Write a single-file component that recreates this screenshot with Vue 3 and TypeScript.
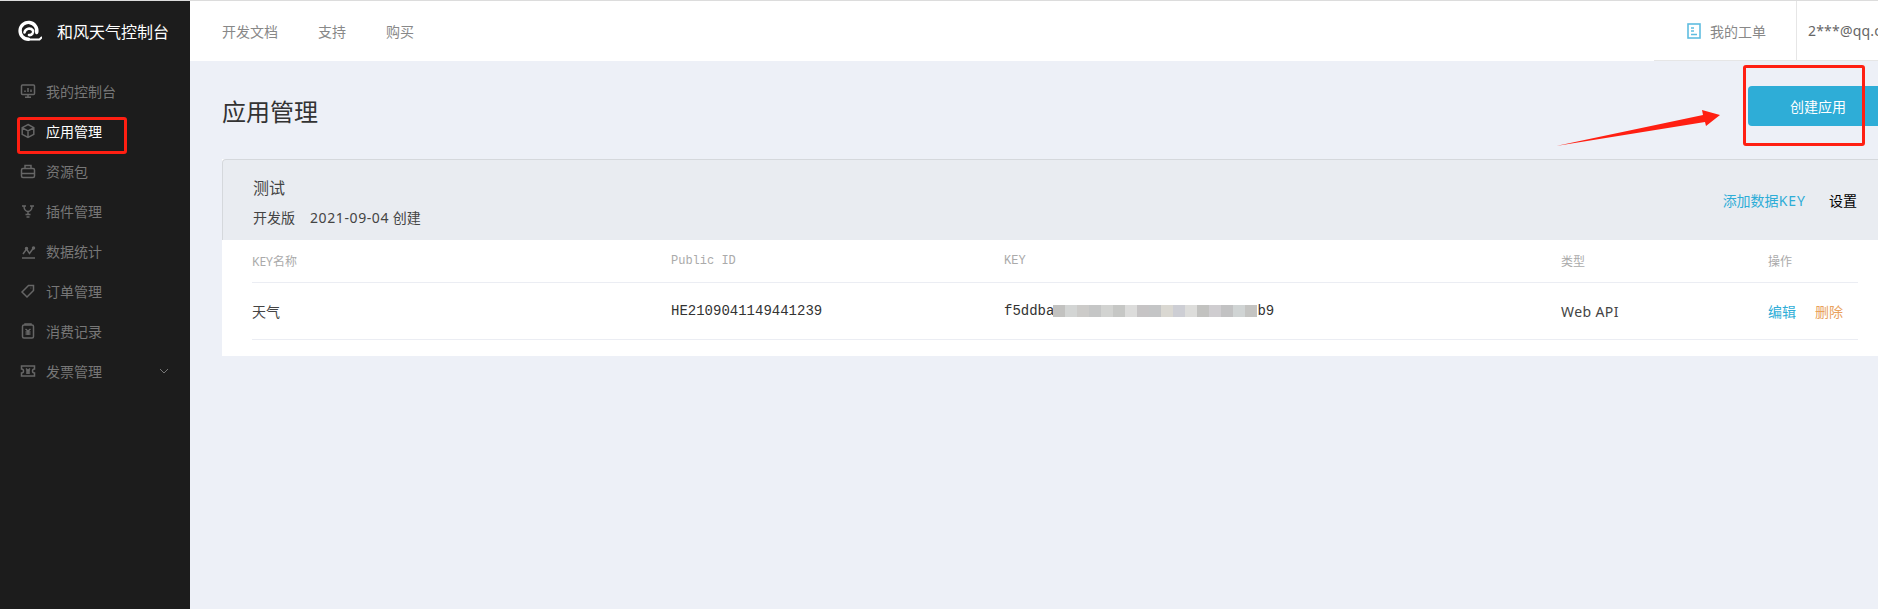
<script setup lang="ts">
const nav = [
  { label: '我的控制台', icon: 'monitor' },
  { label: '应用管理', icon: 'box', active: true },
  { label: '资源包', icon: 'bag' },
  { label: '插件管理', icon: 'plug' },
  { label: '数据统计', icon: 'chart' },
  { label: '订单管理', icon: 'tag' },
  { label: '消费记录', icon: 'clip' },
  { label: '发票管理', icon: 'ticket', arrow: true },
]
const blur = ['#c2c2c0','#d3d5d4','#cccbc9','#c5c6c6','#d2d3d1','#c6c7c5','#dcdcdb','#c6c4c5','#c4c5c6','#dad8d2','#cdced4','#dddddb','#c2c2c0','#cfcdd0','#c2c2c3','#d0d4d4','#c4c4c2']
</script>

<template>
  <div class="page">
    <aside class="side">
      <div class="brand">
        <svg class="logo" viewBox="0 0 24 24" width="24" height="24" fill="none" stroke="#fff" stroke-linecap="round">
          <path d="M10.500 20.200A8.400 8.400 0 1 1 18.700 13.500" stroke-width="3.400" />
          <path d="M10.500 20.400H21.500L23.500 18.500" stroke-width="2" />
          <path d="M6.500 13.500A4.800 4.800 0 0 1 15 11.500A3.500 3.500 0 0 1 11 16" stroke-width="2.600" />
        </svg>
        <span>和风天气控制台</span>
      </div>
      <nav class="menu">
        <div v-for="n in nav" :key="n.label" class="item" :class="{ active: n.active }">
          <svg class="ico" viewBox="0 0 16 16" width="16" height="16" fill="none" stroke="#666" stroke-width="1.500">
            <template v-if="n.icon === 'monitor'"><rect x="1.500" y="2" width="13" height="9.500" rx="1"/><path d="M8 11.500v2.500M5 14.200h6M5 9V7.500M8 9V5M11 9V6.500"/></template>
            <template v-else-if="n.icon === 'box'"><path d="M8 1.500l5.800 3.200v6.600L8 14.500l-5.800-3.200V4.700zM2.400 4.800L8 8l5.600-3.200M8 8v6.300"/></template>
            <template v-else-if="n.icon === 'bag'"><rect x="1.500" y="5.500" width="13" height="9" rx="1.500"/><path d="M5 5.500V2.500h6v3M1.500 10.500h13"/></template>
            <template v-else-if="n.icon === 'plug'"><path d="M2 3h4M10 3h4M4 3c0 3.500 2 5.500 4 5.500S12 6.500 12 3M8 8.500v3M5.500 11.500h5M6.500 14h3"/></template>
            <template v-else-if="n.icon === 'chart'"><path d="M2 15h13M3 11l3.500-5 3 4.500L13.500 5"/><circle cx="6.500" cy="5.500" r="1" fill="#666"/><circle cx="13.500" cy="5" r="1" fill="#666"/></template>
            <template v-else-if="n.icon === 'tag'"><path d="M8.500 2.500h5v5L7 14l-5-5zM10.800 4.700v.6"/></template>
            <template v-else-if="n.icon === 'clip'"><rect x="2.500" y="2" width="11" height="13" rx="1.500"/><path d="M5 2V1h6v1M5.500 6L8 8l2.500-2M5.500 9h5M5.500 11h5M8 8v4"/></template>
            <template v-else><path d="M1.500 3h13v3a2 2 0 0 0 0 4v3h-13v-3a2 2 0 0 0 0-4zM6 5.500l2 2 2-2M6 8h4M6 10h4M8 7.500V11"/></template>
          </svg>
          <span class="label">{{ n.label }}</span>
          <svg v-if="n.arrow" class="chev" viewBox="0 0 10 6" width="10" height="6" fill="none" stroke="#777"><path d="M1 1l4 4 4-4"/></svg>
        </div>
      </nav>
    </aside>

    <div class="main">
      <header class="top">
        <div class="links"><a>开发文档</a><a>支持</a><a>购买</a></div>
        <div class="tools">
          <div class="ticket">
            <svg viewBox="0 0 14 16" width="14" height="16" fill="none" stroke="#5fbde0" stroke-width="1.600"><rect x="1" y="1" width="12" height="14"/><path d="M4 5h3M4 8h3M4 11.500h6"/></svg>
            <span>我的工单</span>
          </div>
          <div class="user">2***@qq.com</div>
        </div>
      </header>

      <section class="content">
        <div class="title-row">
          <h1>应用管理</h1>
          <button class="create">创建应用</button>
        </div>

        <div class="card">
          <div class="card-head">
            <div class="info">
              <div class="app-name">测试</div>
              <div class="app-meta"><span>开发版</span><span><span class="date">2021-09-04</span> 创建</span></div>
            </div>
            <div class="actions"><a class="blue">添加数据<span class="keyword">KEY</span></a><a class="black">设置</a></div>
          </div>
          <div class="table">
            <div class="row head">
              <span>KEY名称</span><span class="mono">Public ID</span><span class="mono">KEY</span><span>类型</span><span>操作</span>
            </div>
            <div class="row body">
              <span>天气</span>
              <span class="mono">HE2109041149441239</span>
              <span class="mono key">f5ddba<i class="blur"><b v-for="(c, i) in blur" :key="i" :style="{ background: c }"></b></i>b9</span>
              <span class="lat">Web API</span>
              <span class="ops"><a class="blue">编辑</a><a class="orange">删除</a></span>
            </div>
          </div>
        </div>
      </section>
    </div>

    <div class="mark mark-side"></div>
    <div class="mark mark-btn"></div>
    <svg class="arrow" viewBox="0 0 170 40" width="170" height="40">
      <polygon points="1,38 148,7 147,2 165,7 151,18 150,14" fill="#ff1f12" />
    </svg>
  </div>
</template>

<style>
html, body { margin: 0; background: #edf0f7; }
</style>

<style scoped>
.page {
  position: relative;
  display: flex;
  width: 1878px;
  height: 609px;
  overflow: hidden;
  border-top: 1px solid #dcdcdc;
  box-sizing: border-box;
  background: #edf0f7;
  font-family: "Noto Sans", "Noto Sans CJK SC", sans-serif;
  font-size: 14px;
  color: #333;
}
.side { width: 190px; flex: none; background: #1c1c1c; }
.brand {
  display: flex;
  align-items: center;
  gap: 15px;
  height: 60px;
  padding-left: 18px;
  color: #fff;
  font-size: 16px;
}
.logo { flex: none; }
.menu { padding-top: 10px; }
.item {
  display: flex;
  align-items: center;
  height: 40px;
  padding-left: 20px;
  color: #777;
  position: relative;
}
.item.active { color: #fff; }
.ico { flex: none; margin-right: 10px; }
.chev { position: absolute; left: 159px; top: 17px; }

.main { width: 1688px; flex: none; }
.top {
  display: flex;
  justify-content: space-between;
  height: 60px;
  background: #fff;
  padding-left: 32px;
  color: #888;
}
.links { display: flex; align-items: center; gap: 40px; }
.tools {
  display: flex;
  align-items: stretch;
  width: 224px;
  border-bottom: 1px solid #e6e6e6;
  box-sizing: border-box;
  flex: none;
  white-space: nowrap;
  overflow: hidden;
}
.ticket {
  display: flex;
  align-items: center;
  gap: 9px;
  width: 143px;
  padding-left: 33px;
  box-sizing: border-box;
  border-right: 1px solid #e6e6e6;
  flex: none;
}
.user { display: flex; align-items: center; padding-left: 11px; color: #666; letter-spacing: 0.2px; }

.content { padding: 0 0 0 32px; }
.title-row {
  display: flex;
  justify-content: space-between;
  align-items: center;
  height: 98px;
}
h1 { margin: 0; font-size: 24px; font-weight: 400; color: #333; }
.create {
  align-self: flex-start;
  width: 140px;
  height: 40px;
  margin: 25px -10px 0 0;
  border: 0;
  border-radius: 4px 0 0 4px;
  background: #2eadd7;
  color: #fff;
  font: inherit;
}
.card { width: 1666px; background: #fff; }
.card-head {
  display: flex;
  justify-content: space-between;
  align-items: center;
  height: 81px;
  box-sizing: border-box;
  padding: 0 0 0 30px;
  background: #e9ecf1;
  border: 1px solid #d5d8dc;
  border-width: 1px 0 0 1px;
  border-radius: 4px 0 0 0;
}
.info { padding-top: 4px; }
.app-name { font-size: 16px; line-height: 22px; color: #444; }
.app-meta { display: flex; gap: 15px; line-height: 20px; margin-top: 9px; color: #444; }
.lat { letter-spacing: 0.4px; }
.date { letter-spacing: 0.6px; }
.keyword { letter-spacing: 1px; }
.actions { display: flex; gap: 23px; padding-right: 31px; }
.blue { color: #2eadd7; }
.black { color: #000; }
.orange { color: #e9a15c; }
.table { padding: 0 30px 16px 30px; }
.row {
  display: grid;
  grid-template-columns: 419px 333px 557px 207px 1fr;
  align-items: center;
  box-sizing: border-box;
  border-bottom: 1px solid #ebedf3;
}
.head { height: 43px; font-size: 12px; color: #aaa; }
.body { height: 57px; color: #444; }
.mono { font-family: "Liberation Mono", "Noto Sans CJK SC", monospace; }
.body .mono { font-size: 14px; color: #333; }
.key { display: flex; align-items: center; }
.blur { display: flex; height: 12px; margin-left: -1px; }
.blur b { width: 12px; height: 12px; }
.ops { display: flex; gap: 19px; }

.mark { position: absolute; border: 3px solid #ff1f12; border-radius: 3px; box-sizing: border-box; }
.mark-side { left: 17px; top: 116px; width: 110px; height: 37px; }
.mark-btn { left: 1743px; top: 64px; width: 122px; height: 81px; }
.arrow { position: absolute; left: 1555px; top: 107px; }
</style>
